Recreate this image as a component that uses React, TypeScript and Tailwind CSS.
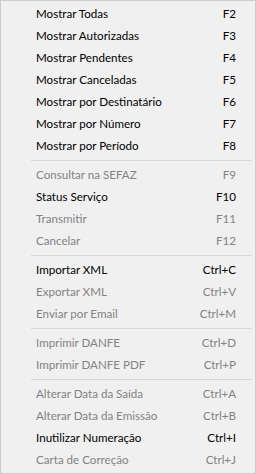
import React from "react";

type Item = { label: string; key: string; disabled?: boolean } | "sep";

const items: Item[] = [
  { label: "Mostrar Todas", key: "F2" },
  { label: "Mostrar Autorizadas", key: "F3" },
  { label: "Mostrar Pendentes", key: "F4" },
  { label: "Mostrar Canceladas", key: "F5" },
  { label: "Mostrar por Destinatário", key: "F6" },
  { label: "Mostrar por Número", key: "F7" },
  { label: "Mostrar por Período", key: "F8" },
  "sep",
  { label: "Consultar na SEFAZ", key: "F9", disabled: true },
  { label: "Status Serviço", key: "F10" },
  { label: "Transmitir", key: "F11", disabled: true },
  { label: "Cancelar", key: "F12", disabled: true },
  "sep",
  { label: "Importar XML", key: "Ctrl+C" },
  { label: "Exportar XML", key: "Ctrl+V", disabled: true },
  { label: "Enviar por Email", key: "Ctrl+M", disabled: true },
  "sep",
  { label: "Imprimir DANFE", key: "Ctrl+D", disabled: true },
  { label: "Imprimir DANFE PDF", key: "Ctrl+P", disabled: true },
  "sep",
  { label: "Alterar Data da Saída", key: "Ctrl+A", disabled: true },
  { label: "Alterar Data da Emissão", key: "Ctrl+B", disabled: true },
  { label: "Inutilizar Numeração", key: "Ctrl+I" },
  { label: "Carta de Correção", key: "Ctrl+J", disabled: true },
];

export default function App() {
  return (
    <div className="w-[256px] h-[474px] bg-[#f0f0f0] border border-[#cccccc] p-[2px] font-['Lato',sans-serif] text-[11.6px] select-none">
      {items.map((it, i) =>
        it === "sep" ? (
          <div key={i} className="h-[7px] flex items-center pl-[28px] pr-[1px]">
            <div className="h-px w-full bg-[#d7d7d7]" />
          </div>
        ) : (
          <div
            key={i}
            className={
              "h-[22px] flex items-center justify-between pl-[33px] pr-[17px] " +
              (it.disabled ? "text-[#838383]" : "text-black")
            }
          >
            <span>{it.label}</span>
            <span>{it.key}</span>
          </div>
        )
      )}
    </div>
  );
}
